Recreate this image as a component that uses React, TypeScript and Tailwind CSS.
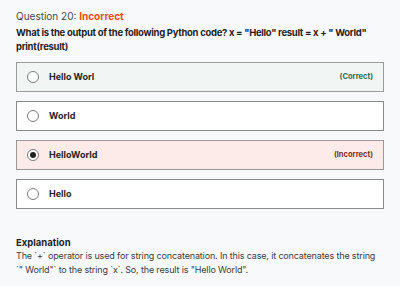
import React from 'react';

type Option = {
  label: string;
  status?: 'correct' | 'incorrect';
  selected?: boolean;
};

const OPTIONS: Option[] = [
  { label: 'Hello Worl', status: 'correct' },
  { label: 'World' },
  { label: 'HelloWorld', status: 'incorrect', selected: true },
  { label: 'Hello' },
];

const OptionRow: React.FC<{ option: Option }> = ({ option }) => {
  const box =
    option.status === 'correct'
      ? 'bg-[#f1f5f3] border-[#9a9d9b]'
      : option.status === 'incorrect'
      ? 'bg-[#fcebe8] border-[#9d9897]'
      : 'bg-white border-[#8a8a8a]';
  return (
    <div className={`flex items-center h-[30px] border ${box} pl-[10px] pr-[10px]`}>
      <span className="w-[12px] h-[12px] rounded-full border border-[#7a7a7a] bg-white flex items-center justify-center">
        {option.selected && <span className="w-[6px] h-[6px] rounded-full bg-[#222]" />}
      </span>
      <span className="ml-[10px] text-[9px] font-bold text-[#1f1f1f]">{option.label}</span>
      {option.status === 'correct' && (
        <span className="ml-auto text-[7.5px] font-bold text-[#2c6b52]">(Correct)</span>
      )}
      {option.status === 'incorrect' && (
        <span className="ml-auto text-[7.5px] font-bold text-[#7d2f25]">(Incorrect)</span>
      )}
    </div>
  );
};

const App: React.FC = () => {
  return (
    <div className="w-[400px] h-[286px] bg-[#f8f9fa] px-[16px] pt-[9px] font-['Inter',sans-serif] text-[#1f1f1f]">
      <p className="text-[10px] leading-[14px] text-[#4a4a4a]">
        Question 20: <span className="font-bold text-[#ee4b1f]">Incorrect</span>
      </p>
      <h2 className="mt-[3px] text-[9.5px] leading-[14px] font-bold tracking-[-0.3px]">
        What is the output of the following Python code? x = "Hello" result = x + " World" print(result)
      </h2>
      <div className="mt-[8px] w-[368px] flex flex-col gap-[9px]">
        {OPTIONS.map((o) => (
          <OptionRow key={o.label} option={o} />
        ))}
      </div>
      <section className="mt-[27px]">
        <h3 className="text-[9.5px] leading-[13px] font-bold">Explanation</h3>
        <p className="text-[9px] leading-[14px] text-[#3c3c3c] tracking-[-0.15px]">
          The `+` operator is used for string concatenation. In this case, it concatenates the string `" World"` to the string `x`. So, the result is "Hello World".
        </p>
      </section>
    </div>
  );
};

export default App;
